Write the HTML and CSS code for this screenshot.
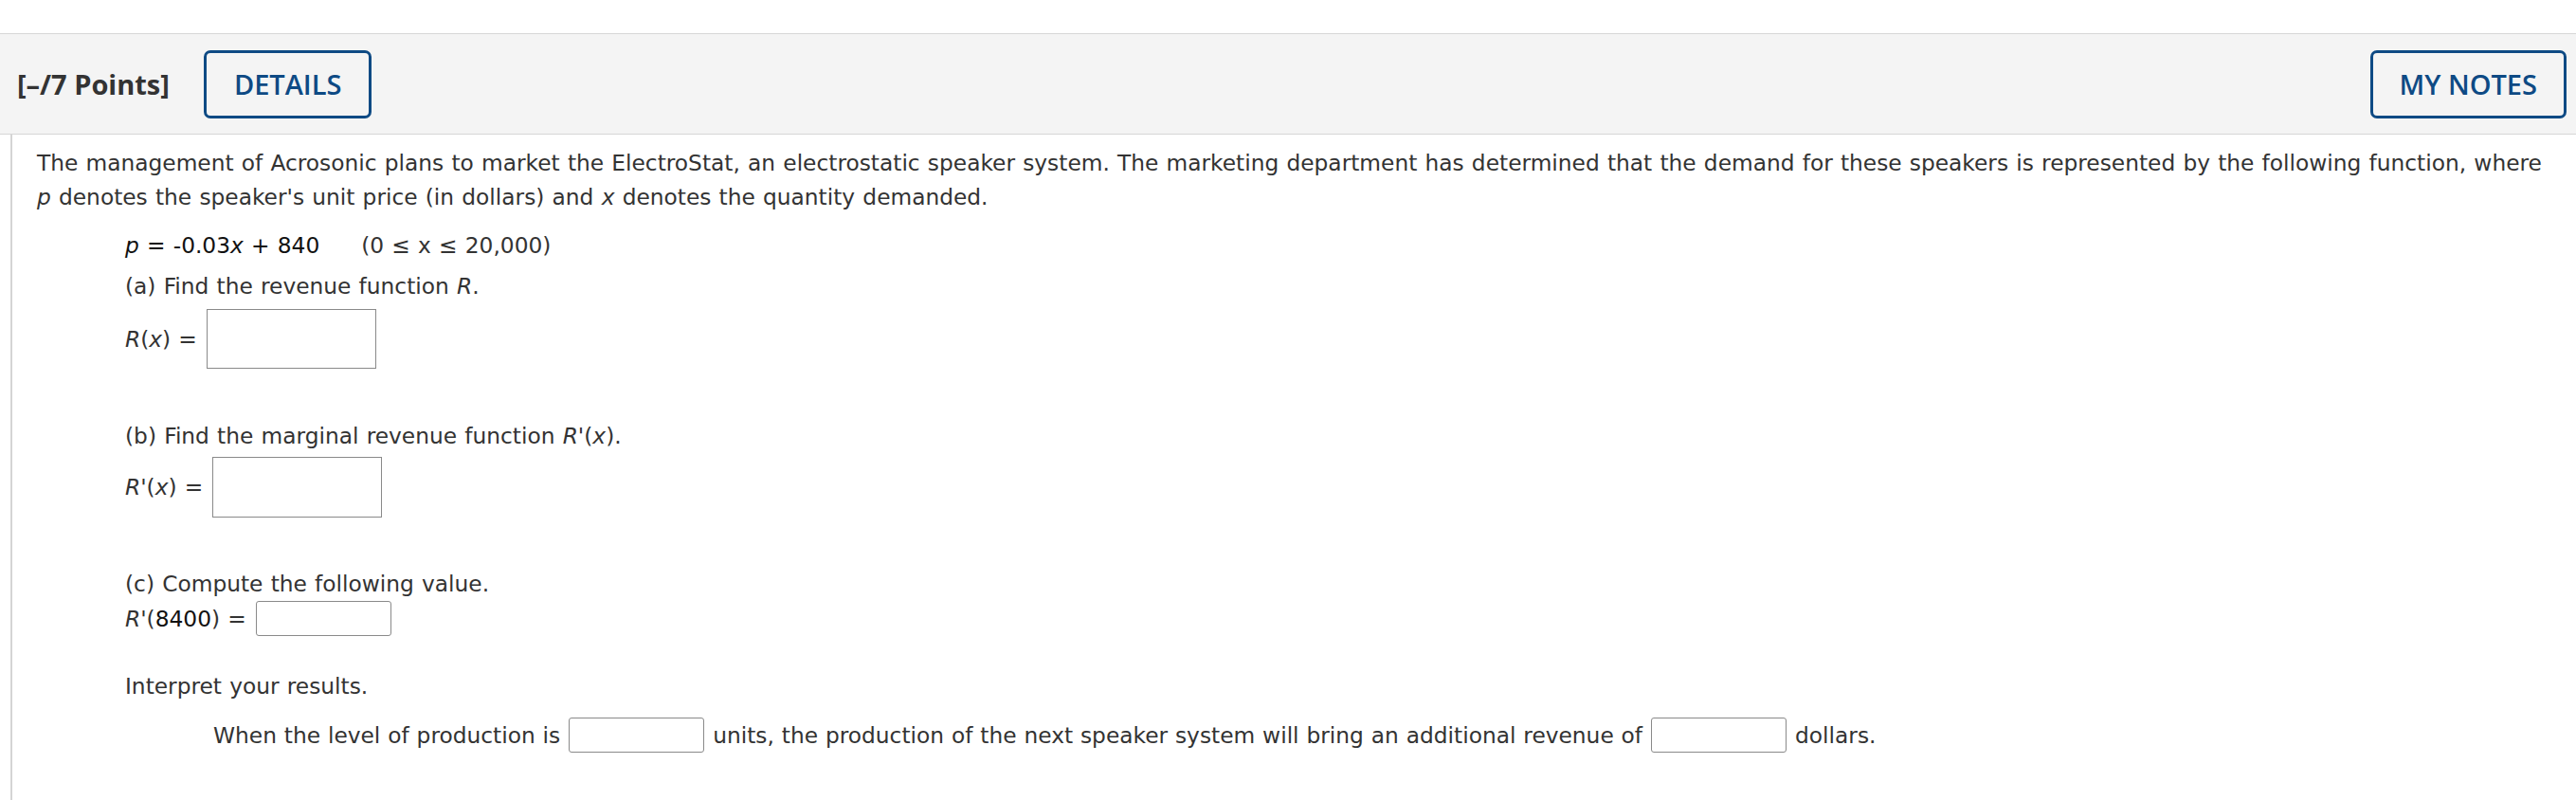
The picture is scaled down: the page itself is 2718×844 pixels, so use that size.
FILE: index.html
```html
<!DOCTYPE html>
<html lang="en">
<head>
<meta charset="utf-8">
<title>Question</title>
<link rel="stylesheet" href="styles.css">
</head>
<body>
<div class="topgap"></div>
<header class="qhead">
  <span class="points">[–/7 Points]</span>
  <button class="btn btn-details">DETAILS</button>
  <span class="spacer"></span>
  <button class="btn btn-notes">MY NOTES</button>
</header>
<main class="qbody">
  <p class="intro">The management of Acrosonic plans to market the ElectroStat, an electrostatic speaker system. The marketing department has determined that the demand for these speakers is represented by the following function, where <i>p</i> denotes the speaker's unit price (in dollars) and <i>x</i> denotes the quantity demanded.</p>
  <div class="parts">
    <p class="eq"><span class="dark"><i>p</i> = -0.03<i>x</i> + 840</span><span class="dom">(0 ≤ x ≤ 20,000)</span></p>
    <p class="q qa">(a) Find the revenue function <i>R</i>.</p>
    <div class="row row-a"><span class="lbl"><i>R</i>(<i>x</i>) =</span><span class="box box-big"></span></div>
    <p class="q qb">(b) Find the marginal revenue function <i>R</i>'(<i>x</i>).</p>
    <div class="row row-b"><span class="lbl"><i>R</i>'(<i>x</i>) =</span><span class="box box-big box-b"></span></div>
    <p class="q qc">(c) Compute the following value.</p>
    <div class="row row-c"><span class="lbl"><i>R</i>'(<span class="dark">8400</span>) =</span><span class="box box-small"></span></div>
    <p class="q qi">Interpret your results.</p>
    <div class="row row-i"><span>When the level of production is</span><span class="box box-small"></span><span>units, the production of the next speaker system will bring an additional revenue of</span><span class="box box-small"></span><span>dollars.</span></div>
  </div>
</main>
</body>
</html>
```
FILE: styles.css
```css
html, body {
  margin: 0;
  padding: 0;
  background: #ffffff;
}
body {
  font-family: "DejaVu Sans", Verdana, sans-serif;
  color: #333333;
  width: 2718px;
  height: 844px;
  overflow: hidden;
}
.topgap {
  height: 35px;
}
.qhead {
  display: flex;
  align-items: center;
  height: 105px;
  background: #f4f4f4;
  border-top: 1px solid #d6d6d6;
  border-bottom: 1px solid #d6d6d6;
  padding: 0 10px 0 18px;
}
.points {
  font-family: "Open Sans", sans-serif;
  font-weight: 700;
  font-size: 29px;
  color: #333333;
  margin-right: 36px;
}
.spacer {
  flex: 1;
}
.btn {
  font-family: "Open Sans", sans-serif;
  font-weight: 600;
  font-size: 29px;
  color: #0e4a84;
  background: transparent;
  border: 3px solid #0e4a84;
  border-radius: 7px;
  height: 72px;
  padding: 0 29px;
  margin: 0;
  box-sizing: border-box;
}
.btn-notes {
  padding: 0 28px;
}
.qbody {
  margin-left: 11px;
  border-left: 2px solid #d4d4d4;
  padding: 12px 24px 0 26px;
  height: 702px;
  box-sizing: border-box;
  font-size: 23.3px;
  word-spacing: 0.8px;
  line-height: 36px;
}
.intro {
  margin: 0;
}
.parts {
  padding-left: 93px;
}
.eq {
  margin: 15px 0 0 0;
}
.dark {
  color: #111111;
}
.dom {
  margin-left: 44px;
}
.q {
  margin: 0;
}
.qa { margin-top: 7px; }
.qb { margin-top: 53px; }
.qc { margin-top: 52px; }
.qi { margin-top: 35px; }
.row {
  display: flex;
  align-items: center;
}
.row-a { margin-top: 6px; }
.row-b { margin-top: 4px; }
.row-c { margin-top: 0; }
.row-i {
  margin-top: 15px;
  padding-left: 93px;
  word-spacing: 0.5px;
}
.lbl {
  margin-right: 10px;
}
.box {
  display: inline-block;
  box-sizing: border-box;
  background: #ffffff;
}
.box-big {
  width: 179px;
  height: 63px;
  border: 1px solid #8a8a8a;
}
.box-b {
  height: 64px;
}
.box-small {
  width: 143px;
  height: 37px;
  border: 1px solid #8a8a8a;
  border-radius: 3px;
}
.row-i .box-small {
  margin: 0 9px 0 9px;
}
```
